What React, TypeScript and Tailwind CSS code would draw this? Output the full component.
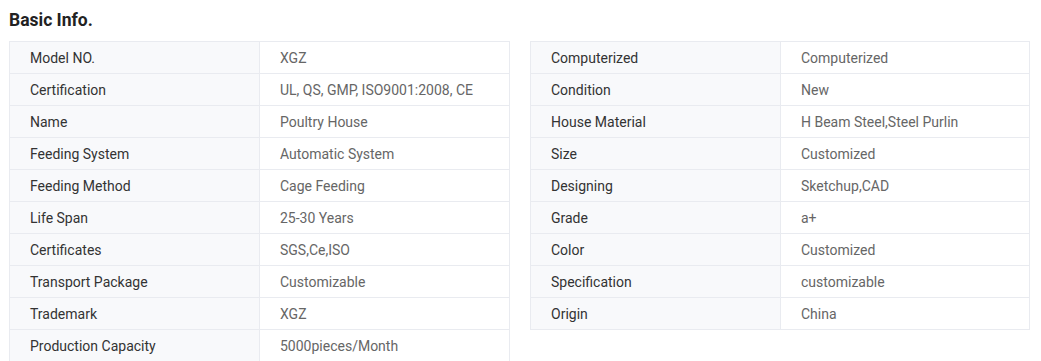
import React from "react";

const left: [string, string][] = [
  ["Model NO.", "XGZ"],
  ["Certification", "UL, QS, GMP, ISO9001:2008, CE"],
  ["Name", "Poultry House"],
  ["Feeding System", "Automatic System"],
  ["Feeding Method", "Cage Feeding"],
  ["Life Span", "25-30 Years"],
  ["Certificates", "SGS,Ce,ISO"],
  ["Transport Package", "Customizable"],
  ["Trademark", "XGZ"],
  ["Production Capacity", "5000pieces/Month"],
];

const right: [string, string][] = [
  ["Computerized", "Computerized"],
  ["Condition", "New"],
  ["House Material", "H Beam Steel,Steel Purlin"],
  ["Size", "Customized"],
  ["Designing", "Sketchup,CAD"],
  ["Grade", "a+"],
  ["Color", "Customized"],
  ["Specification", "customizable"],
  ["Origin", "China"],
];

function Table({ rows, wide }: { rows: [string, string][]; wide: boolean }) {
  return (
    <div className={`${wide ? "w-[501px]" : "w-[500px]"} border border-[#e9ebf0] flex flex-col self-start`}>
      {rows.map(([k, v], i) => (
        <div
          key={i}
          className={`grid grid-cols-[250px_1fr] h-[31px] ${i > 0 ? "box-content border-t border-[#e9ebf0]" : ""}`}
        >
          <div className="bg-[#f8f9fb] border-r border-[#e9ebf0] pl-5 pt-[2px] flex items-center text-[14px] text-[#333333]">
            {k}
          </div>
          <div className="bg-white pl-5 pt-[2px] flex items-center text-[14px] text-[#666666]">{v}</div>
        </div>
      ))}
    </div>
  );
}

export default function App() {
  return (
    <div
      className="w-[1041px] h-[361px] overflow-hidden bg-white pl-[9px] pt-[8px]"
      style={{ fontFamily: "Roboto, 'Liberation Sans', sans-serif" }}
    >
      <div className="h-[24px] leading-[24px] text-[17.5px] font-bold text-[#222222] mb-[9px]">Basic Info.</div>
      <div className="flex gap-[20px]">
        <Table rows={left} wide={true} />
        <Table rows={right} wide={false} />
      </div>
    </div>
  );
}
